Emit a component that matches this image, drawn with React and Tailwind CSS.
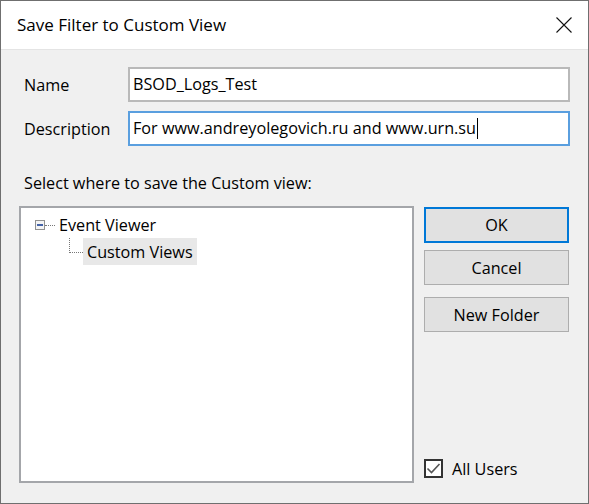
import { useState } from "react";

function CloseIcon() {
    return (
        <svg width="16" height="16" viewBox="0 0 16 16" className="block">
            <path d="M0.5 0.5 L15.5 15.5 M15.5 0.5 L0.5 15.5" stroke="#111" strokeWidth="1.1" fill="none" />
        </svg>
    );
}

function Field({ label, value, focused }) {
    return (
        <>
            <span className="leading-none pt-[1px]">{label}</span>
            <div
                className={
                    focused
                        ? "h-[35px] bg-white border-2 border-[#5a9fdf] flex items-center pl-[3px]"
                        : "h-[35px] bg-white border-2 border-[#b9b9b9] flex items-center pl-[3px]"
                }
            >
                <span className="whitespace-nowrap">{value}</span>
                {focused && <span className="w-[1px] h-[21px] bg-black ml-[1px]"></span>}
            </div>
        </>
    );
}

function Button({ children, primary, className }) {
    return (
        <button
            className={
                (primary
                    ? "h-[36px] border-2 border-[#0078d7] "
                    : "h-[35px] border border-[#adadad] ") +
                "w-full bg-[#e1e1e1] flex items-center justify-center " +
                className
            }
        >
            {children}
        </button>
    );
}

export default function App() {
    const [allUsers, setAllUsers] = useState(true);

    return (
        <div
            className="w-[589px] h-[504px] border border-[#6f6f6f] bg-[#f0f0f0] flex flex-col text-[16.2px] text-black overflow-hidden"
            style={{ fontFamily: '"Segoe UI", "Open Sans", "Noto Sans", sans-serif' }}
        >
            {/* title bar */}
            <div className="h-[49px] bg-white border-b border-[#e4e4e4] flex items-center justify-between pl-[16px] pr-[16px] shrink-0 text-[17px]">
                <span>Save Filter to Custom View</span>
                <CloseIcon />
            </div>

            {/* fields */}
            <div className="grid grid-cols-[104px_1fr] items-center gap-y-[9px] pl-[23px] pr-[18px] pt-[17px]">
                <Field label="Name" value="BSOD_Logs_Test" />
                <Field label="Description" value="For www.andreyolegovich.ru and www.urn.su" focused />
            </div>

            <div className="pl-[23px] mt-[29px] leading-none">Select where to save the Custom view:</div>

            <div className="flex pl-[18px] mt-[15px]">
                {/* tree */}
                <div className="w-[395px] h-[277px] bg-white border-2 border-[#a4a6aa] pt-[4px]">
                    <div className="flex items-center h-[26px] pl-[14px]">
                        <span className="w-[10px] h-[10px] border border-[#919191] bg-[#f4f4f4] flex items-center justify-center">
                            <span className="w-[6px] h-[2px] bg-[#4463a8]"></span>
                        </span>
                        <span className="w-[10px] border-t border-dotted border-[#777]"></span>
                        <span className="px-[4px]">Event Viewer</span>
                    </div>
                    <div className="flex h-[27px] pl-[48px]">
                        <span className="w-[14px] h-[15px] border-l border-b border-dotted border-[#777]"></span>
                        <span className="px-[4px] bg-[#e8e8e8] flex items-center">Custom Views</span>
                    </div>
                </div>

                {/* buttons */}
                <div className="w-[145px] ml-[10px] flex flex-col pt-[1px]">
                    <Button primary>OK</Button>
                    <Button className="mt-[7px]">Cancel</Button>
                    <Button className="mt-[12px]">New Folder</Button>
                    <label className="mt-auto mb-[5px] flex items-center">
                        <span
                            onClick={() => setAllUsers(!allUsers)}
                            className="w-[19px] h-[19px] border-2 border-[#333] bg-white flex items-center justify-center"
                        >
                            {allUsers && (
                                <svg width="15" height="15" viewBox="0 0 15 15">
                                    <path d="M1.5 7.5 L5.5 11.5 L13.5 3" stroke="#555" strokeWidth="1.6" fill="none" />
                                </svg>
                            )}
                        </span>
                        <span className="ml-[9px] leading-none">All Users</span>
                    </label>
                </div>
            </div>
        </div>
    );
}
